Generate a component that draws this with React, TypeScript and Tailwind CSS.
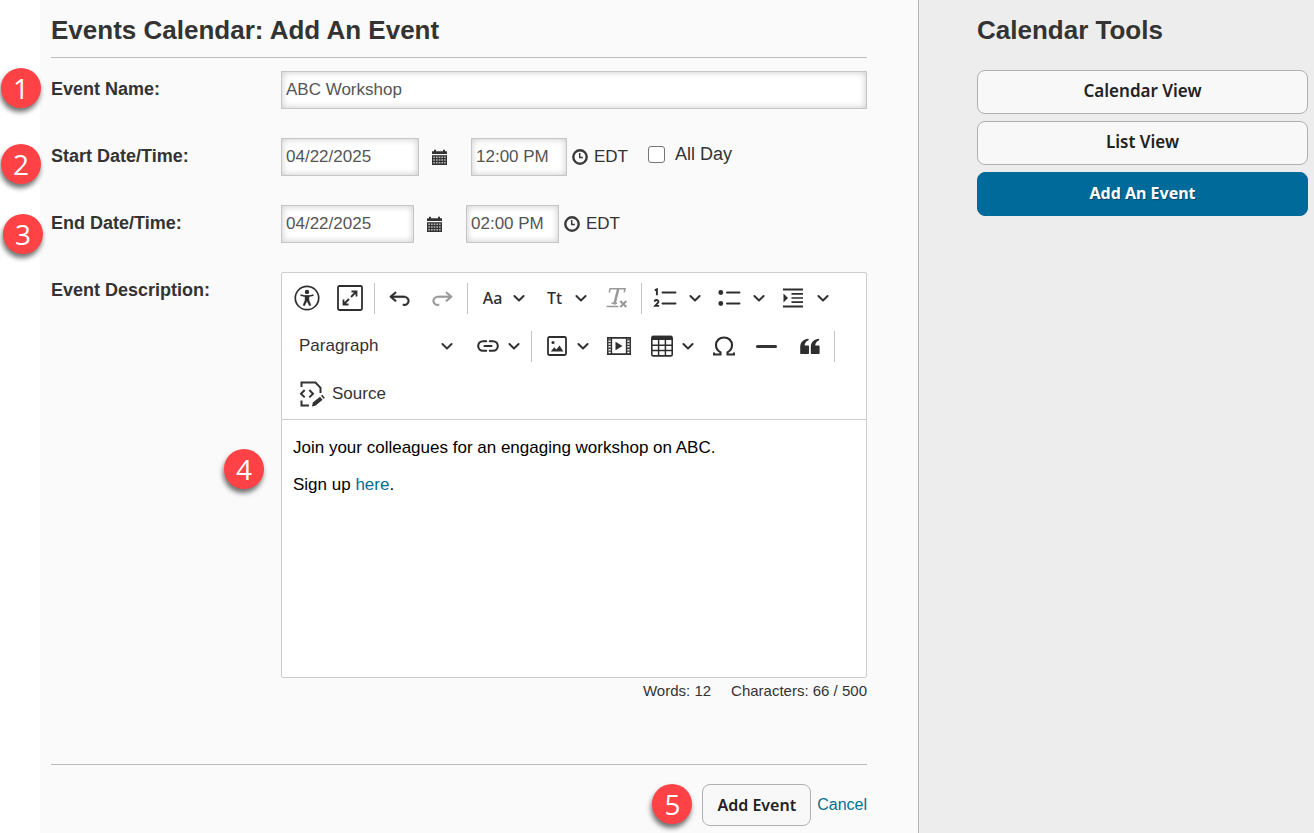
import type { ReactNode } from "react";

const fieldClass =
  "border border-[#c6c6c6] bg-white px-1 text-[17px] text-[#555] shadow-[inset_0_0_7px_rgba(0,0,0,0.22)] outline-none";

function Badge({ n, place }: { n: number; place: string }) {
  return (
    <span
      aria-hidden="true"
      className={`absolute flex size-10 items-center justify-center rounded-full bg-[#ff4245] font-['Open_Sans',sans-serif] text-[28px] leading-none text-white shadow-[-1px_4px_5px_rgba(0,0,0,0.55)] ${place}`}
    >
      {n}
    </span>
  );
}

function Row({ label, htmlFor, badge, children }: { label: string; htmlFor: string; badge?: ReactNode; children: ReactNode }) {
  return (
    <div className="relative flex items-start">
      {badge}
      <label htmlFor={htmlFor} className="w-[230px] shrink-0 pt-1.5 text-lg leading-6 font-bold">
        {label}
      </label>
      <div className="min-w-0 flex-1">{children}</div>
    </div>
  );
}

function CalendarIcon() {
  return (
    <svg width="15" height="16" viewBox="0 0 15 16" fill="#333">
      <path d="M0 2.300h2V.8h2v1.500h7V.8h2v1.500h2V5H0z" />
      <path d="M0 6.200h15V16H0z" />
      <path d="M1.300 8.200h12.400M1.300 11h12.400M1.300 13.800h12.400" stroke="#b4b4b4" strokeWidth="1.500" strokeDasharray="1.700 .98" />
    </svg>
  );
}

function ClockIcon() {
  return (
    <svg width="16" height="16" viewBox="0 0 16 16" fill="none" stroke="#3a3a3a">
      <circle cx="8" cy="8" r="6.700" strokeWidth="2.400" />
      <path d="M7.700 4v4.600h3.200" strokeWidth="1.500" />
    </svg>
  );
}

function DateTime({ id, date, time, dateWidth, timeWidth, extra }: { id: string; date: string; time: string; dateWidth: string; timeWidth: string; extra?: ReactNode }) {
  return (
    <div className="flex items-center">
      <input id={id} defaultValue={date} className={`h-[38px] ${fieldClass} ${dateWidth}`} />
      <button type="button" aria-label="Choose date" className="mr-6 ml-[13px] flex">
        <CalendarIcon />
      </button>
      <input aria-label={`${id} time`} defaultValue={time} className={`h-[38px] ${fieldClass} ${timeWidth}`} />
      <button type="button" aria-label="Choose time" className="mr-1.5 ml-[5px] flex">
        <ClockIcon />
      </button>
      <span className="text-[17px]">EDT</span>
      {extra}
    </div>
  );
}

function Chevron() {
  return (
    <svg width="14" height="14" viewBox="0 0 14 14" fill="none" stroke="currentColor" strokeWidth="1.900" strokeLinecap="round" strokeLinejoin="round">
      <path d="M2.400 5 7 9.500 11.600 5" />
    </svg>
  );
}

function Tool({ label, children, disabled }: { label: string; children: ReactNode; disabled?: boolean }) {
  return (
    <button type="button" aria-label={label} disabled={disabled} className="flex h-11 w-[39px] items-center justify-center disabled:text-[#999]">
      {children}
    </button>
  );
}

function DropTool({ label, children, wide }: { label: string; children: ReactNode; wide?: boolean }) {
  return (
    <button type="button" aria-label={label} className={`flex h-11 items-center ${wide ? "w-[60px] gap-1.5" : "w-[58px]"}`}>
      <span className={`flex shrink-0 justify-center font-['Noto_Sans',sans-serif] text-[16px] font-medium ${wide ? "w-[35px]" : "w-[39px]"}`}>{children}</span>
      <Chevron />
    </button>
  );
}

function Divider() {
  return <span className="mx-px h-[31px] w-px bg-[#c4c4c8]" />;
}

function AccessibilityIcon() {
  return (
    <svg width="26" height="26" viewBox="0 0 26 26" fill="none" stroke="currentColor">
      <circle cx="13" cy="13" r="11.700" strokeWidth="1.700" />
      <circle cx="13" cy="6.900" r="2.200" fill="currentColor" stroke="none" />
      <path d="M7.200 10.200c2 .6 3.500 1 5.800 1s3.800-.4 5.800-1" strokeWidth="1.700" strokeLinecap="round" />
      <path d="M11 10.800h4v4.400l2 5-1.600.6L13 16l-2.400 4.800-1.600-.6 2-5z" fill="currentColor" strokeWidth=".4" />
    </svg>
  );
}

function FullscreenIcon() {
  return (
    <svg width="26" height="26" viewBox="0 0 26 26" fill="none" stroke="currentColor" strokeWidth="1.800">
      <rect x="1" y="1" width="24" height="24" rx="1.500" />
      <path d="M14.500 6.500h5v5M19 7l-5 5M6.500 14.500v5h5M7 19l5-5" />
    </svg>
  );
}

function UndoIcon({ flip }: { flip?: boolean }) {
  return (
    <svg width="25" height="25" viewBox="0 0 20 20" fill="currentColor" className={flip ? "-scale-x-100" : ""}>
      <path stroke="currentColor" strokeWidth=".2" d="m5.042 9.367 2.189 1.837a.75.75 0 0 1-.965 1.149l-3.788-3.180a.747.747 0 0 1-.21-.284.75.75 0 0 1 .17-.945L6.230 4.762a.75.75 0 1 1 .964 1.150L4.863 7.866h8.917A.75.75 0 0 1 14 7.900a4 4 0 1 1-1.477 7.718l.344-1.489a2.500 2.500 0 1 0 1.094-4.730l.008-.032H5.042z" />
    </svg>
  );
}

function ClearFormatIcon() {
  return (
    <svg width="22" height="22" viewBox="0 0 22 22" fill="none" stroke="currentColor">
      <path d="M3.200 5.400 4.200 1.700h14.800L18.200 5.400" strokeWidth="1.600" />
      <path d="M12.200 2 8.300 17.500" strokeWidth="2.600" />
      <path d="M5.500 16.300h5.500M.5 19.600h12" strokeWidth="1.500" />
      <path d="m14.300 14 6 6M20.300 14l-6 6" strokeWidth="2" />
    </svg>
  );
}

function NumberedIcon() {
  return (
    <svg width="24" height="22" viewBox="0 0 24 22" fill="none" stroke="currentColor" strokeWidth="1.900">
      <path d="M9.500 5.500h13M9.500 16.500h13" strokeLinecap="round" />
      <path d="M1.800 3.400 3.900 2.300v5.900" />
      <path d="M1.700 14.800c0-2.300 3.700-2.300 3.700-.2 0 1.500-1.800 2.200-3.300 4.300h4" strokeWidth="1.900" />
    </svg>
  );
}

function BulletedIcon() {
  return (
    <svg width="24" height="22" viewBox="0 0 24 22" fill="currentColor" stroke="currentColor" strokeWidth="1.900">
      <path d="M10 5.500h12.500M10 16.500h12.500" strokeLinecap="round" />
      <circle cx="3.800" cy="5.500" r="1.500" />
      <circle cx="3.800" cy="16.500" r="1.500" />
    </svg>
  );
}

function IndentIcon() {
  return (
    <svg width="20" height="20" viewBox="0 0 20 20" fill="none" stroke="currentColor" strokeWidth="1.900">
      <path d="M0 1.500h20M0 18.500h20" />
      <path d="M8.500 5.800H20M8.500 10H20M8.500 14.200H20" strokeWidth="1.700" />
      <path d="M.5 5.500v9L5 10z" fill="currentColor" stroke="none" />
    </svg>
  );
}

function LinkIcon() {
  return (
    <svg width="22" height="14" viewBox="0 0 22 14" fill="none" stroke="currentColor" strokeWidth="2.100" strokeLinecap="round">
      <path d="M9.200 2.200H6a4.800 4.800 0 0 0 0 9.600h3.200M12.800 2.200H16a4.800 4.800 0 0 1 0 9.600h-3.200M7.500 7h7" />
    </svg>
  );
}

function ImageIcon() {
  return (
    <svg width="20" height="20" viewBox="0 0 20 20" fill="none" stroke="currentColor" strokeWidth="1.800">
      <rect x="1" y="1" width="18" height="18" rx="1.500" />
      <circle cx="6" cy="6.600" r="1.500" fill="currentColor" stroke="none" />
      <path d="m3.800 15.500 3.400-4.300 2.200 2.400 3.100-4 3.900 5.900z" fill="currentColor" stroke="none" />
    </svg>
  );
}

function MediaIcon() {
  return (
    <svg width="24" height="20" viewBox="0 0 24 20" fill="none" stroke="currentColor">
      <path d="M0 1.900h24M0 18.100h24" strokeWidth="1.900" />
      <path d="M.8 1v18M23.200 1v18M4.400 2v16M19.600 2v16" strokeWidth="1.500" />
      <path d="M2.600 3.200v14M21.400 3.200v14" strokeWidth="2.400" strokeDasharray="1.300 1.500" />
      <path d="M8.500 5.700v8.600l7-4.300z" fill="currentColor" stroke="none" />
    </svg>
  );
}

function TableIcon() {
  return (
    <svg width="22" height="22" viewBox="0 0 22 22" fill="none" stroke="currentColor">
      <rect x=".8" y="1.500" width="20.400" height="19.400" rx="1.500" strokeWidth="1.600" />
      <path d="M1 .8h20V5H1z" fill="currentColor" stroke="none" />
      <path d="M1 10.200h20M1 15.500h20M7.600 4v17M14.400 4v17" strokeWidth="1.500" />
    </svg>
  );
}

function OmegaIcon() {
  return (
    <svg width="22" height="20" viewBox="0 0 22 20" fill="none" stroke="currentColor" strokeWidth="2.100">
      <path d="M1 16.500V18.500h6.500v-2.200C4.700 14.600 3 12.400 3 9.200 3 4.600 6.400 1.500 11 1.500s8 3.100 8 7.700c0 3.200-1.700 5.400-4.500 7.100v2.200H21v-2" />
    </svg>
  );
}

function QuoteIcon() {
  return (
    <svg width="20" height="17" viewBox="0 0 20 17" fill="currentColor">
      <path d="M8.600.8v1.400C6.200 3.100 4.900 4.800 4.600 7.500H8c.6 0 1 .4 1 1V15c0 .6-.4 1-1 1H1.200c-.6 0-1-.4-1-1V9C.2 4.300 3.500 1.100 8.600.8z" />
      <path d="M19.200.8v1.400c-2.400.9-3.700 2.600-4 5.300h3.400c.6 0 1 .4 1 1V15c0 .6-.4 1-1 1h-6.800c-.6 0-1-.4-1-1V9c0-4.700 3.300-7.900 8.400-8.200z" />
    </svg>
  );
}

function SourceIcon() {
  return (
    <svg width="26" height="26" viewBox="0 0 26 26" fill="none" stroke="currentColor" strokeWidth="2">
      <path d="M2.500 6V1.500h14l5 5.300V12M2.500 19.500v5H10" />
      <path d="M5.700 9 2 12.700l3.700 3.700M10.300 9l3.700 3.700-3.700 3.700" />
      <path d="m13 25.500.8-4 7.200-5.800 2.600 3-7.200 6z" fill="currentColor" stroke="none" />
      <path d="m22 14.800 1.300-1.100 2.500 3-1.300 1.100z" fill="currentColor" stroke="none" />
    </svg>
  );
}

function Editor() {
  return (
    <div className="overflow-hidden rounded-xs border border-[#ccced1] bg-white">
      <div role="toolbar" aria-label="Editor toolbar" className="flex flex-wrap items-center gap-1 border-b border-[#ccced1] py-[3px] pl-[5px] text-[#2e2e2e]">
        <Tool label="Accessibility help"><AccessibilityIcon /></Tool>
        <Tool label="Fullscreen"><FullscreenIcon /></Tool>
        <Divider />
        <Tool label="Undo"><UndoIcon /></Tool>
        <Tool label="Redo" disabled><UndoIcon flip /></Tool>
        <Divider />
        <DropTool label="Font family">Aa</DropTool>
        <DropTool label="Font size">Tt</DropTool>
        <Tool label="Remove format" disabled><ClearFormatIcon /></Tool>
        <Divider />
        <DropTool label="Numbered list" wide><NumberedIcon /></DropTool>
        <DropTool label="Bulleted list" wide><BulletedIcon /></DropTool>
        <DropTool label="Indent" wide><IndentIcon /></DropTool>
        <button type="button" className="flex h-11 w-[177px] items-center justify-between pr-2.5 pl-3 text-[17px] text-[#333]">
          Paragraph
          <Chevron />
        </button>
        <DropTool label="Link"><LinkIcon /></DropTool>
        <Divider />
        <DropTool label="Image"><ImageIcon /></DropTool>
        <Tool label="Media"><MediaIcon /></Tool>
        <DropTool label="Table"><TableIcon /></DropTool>
        <Tool label="Special characters"><OmegaIcon /></Tool>
        <Tool label="Horizontal line"><span className="h-[3px] w-[21px] rounded-xs bg-[#333]" /></Tool>
        <Tool label="Block quote"><QuoteIcon /></Tool>
        <Divider />
        <button type="button" className="flex h-11 items-center gap-[7px] px-3 text-[17px] text-[#333]">
          <SourceIcon />
          Source
        </button>
      </div>
      <div id="description" role="textbox" aria-label="Event Description" contentEditable suppressContentEditableWarning className="min-h-[257px] space-y-3 px-[11px] py-[15px] text-[17px] leading-[25px] text-black outline-none">
        <p>Join your colleagues for an engaging workshop on ABC.</p>
        <p>Sign up <a href="#signup" className="text-[#007090]">here</a>.</p>
      </div>
    </div>
  );
}

const toolLink =
  "flex h-11 items-center justify-center rounded-lg border pb-0.5 font-['Noto_Sans',sans-serif]";

export default function App() {
  return (
    <div className="flex min-h-screen bg-white font-['Liberation_Sans',Arial,sans-serif] text-[#333]">
      <main className="ml-10 min-w-0 flex-1 bg-[#fafafa] pr-[51px] pl-[11px]">
        <h1 className="border-b border-[#bdbdbd] pt-3 pb-[9px] text-[26px] leading-9 font-bold">Events Calendar: Add An Event</h1>
        <form onSubmit={(e) => e.preventDefault()}>
          <div className="flex flex-col gap-[29px] pt-[13px]">
            <Row label="Event Name:" htmlFor="name" badge={<Badge n={1} place="-left-[50px] -top-[3px]" />}>
              <input id="name" defaultValue="ABC Workshop" className={`h-[38px] w-full ${fieldClass}`} />
            </Row>
            <Row label="Start Date/Time:" htmlFor="start" badge={<Badge n={2} place="-left-[50px] top-1.5" />}>
              <DateTime
                id="start"
                date="04/22/2025"
                time="12:00 PM"
                dateWidth="w-[138px]"
                timeWidth="w-24"
                extra={
                  <label className="ml-5 flex items-center gap-2.5 pb-1.5 text-lg leading-6">
                    <input type="checkbox" className="size-[17px] appearance-none rounded-[3px] border border-[#767676] bg-white" />
                    All Day
                  </label>
                }
              />
            </Row>
            <Row label="End Date/Time:" htmlFor="end" badge={<Badge n={3} place="-left-12 top-[9px]" />}>
              <DateTime id="end" date="04/22/2025" time="02:00 PM" dateWidth="w-[133px]" timeWidth="w-[93px]" />
            </Row>
            <Row label="Event Description:" htmlFor="description" badge={<Badge n={4} place="left-[173px] top-[177px]" />}>
              <Editor />
              <div className="flex justify-end gap-5 pt-[3px] text-[15px] leading-5">
                <span>Words: 12</span>
                <span>Characters: 66 / 500</span>
              </div>
            </Row>
          </div>
          <div className="mt-[63px] flex items-center justify-end gap-1.5 border-t border-[#bdbdbd] pt-[19px] pb-[7px]">
            <div className="relative">
              <Badge n={5} place="-left-[50px] top-0" />
              <button type="submit" className="h-[42px] rounded-lg border border-[#b0b0b0] bg-[#f8f8f8] px-3.5 font-['Noto_Sans',sans-serif] text-base font-semibold text-[#222]">
                Add Event
              </button>
            </div>
            <a href="#cancel" className="text-base text-[#007090]">Cancel</a>
          </div>
        </form>
      </main>
      <aside className="w-[396px] shrink-0 border-l border-[#b5b5b5] bg-[#ededed] pr-1.5 pl-[58px]">
        <h2 className="pt-3 text-[26px] leading-9 font-bold">Calendar Tools</h2>
        <nav className="mt-[22px] flex flex-col gap-[7px]">
          <a href="#calendar" className={`${toolLink} border-[#b0b0b0] bg-[#f8f8f8] text-[17px] font-semibold text-[#222]`}>Calendar View</a>
          <a href="#list" className={`${toolLink} border-[#b0b0b0] bg-[#f8f8f8] text-[17px] font-semibold text-[#222]`}>List View</a>
          <a href="#add" className={`${toolLink} border-[#006b9a] bg-[#006b9a] text-base font-bold text-white [text-shadow:1px_1px_1px_rgba(0,0,0,0.35)]`}>Add An Event</a>
        </nav>
      </aside>
    </div>
  );
}
